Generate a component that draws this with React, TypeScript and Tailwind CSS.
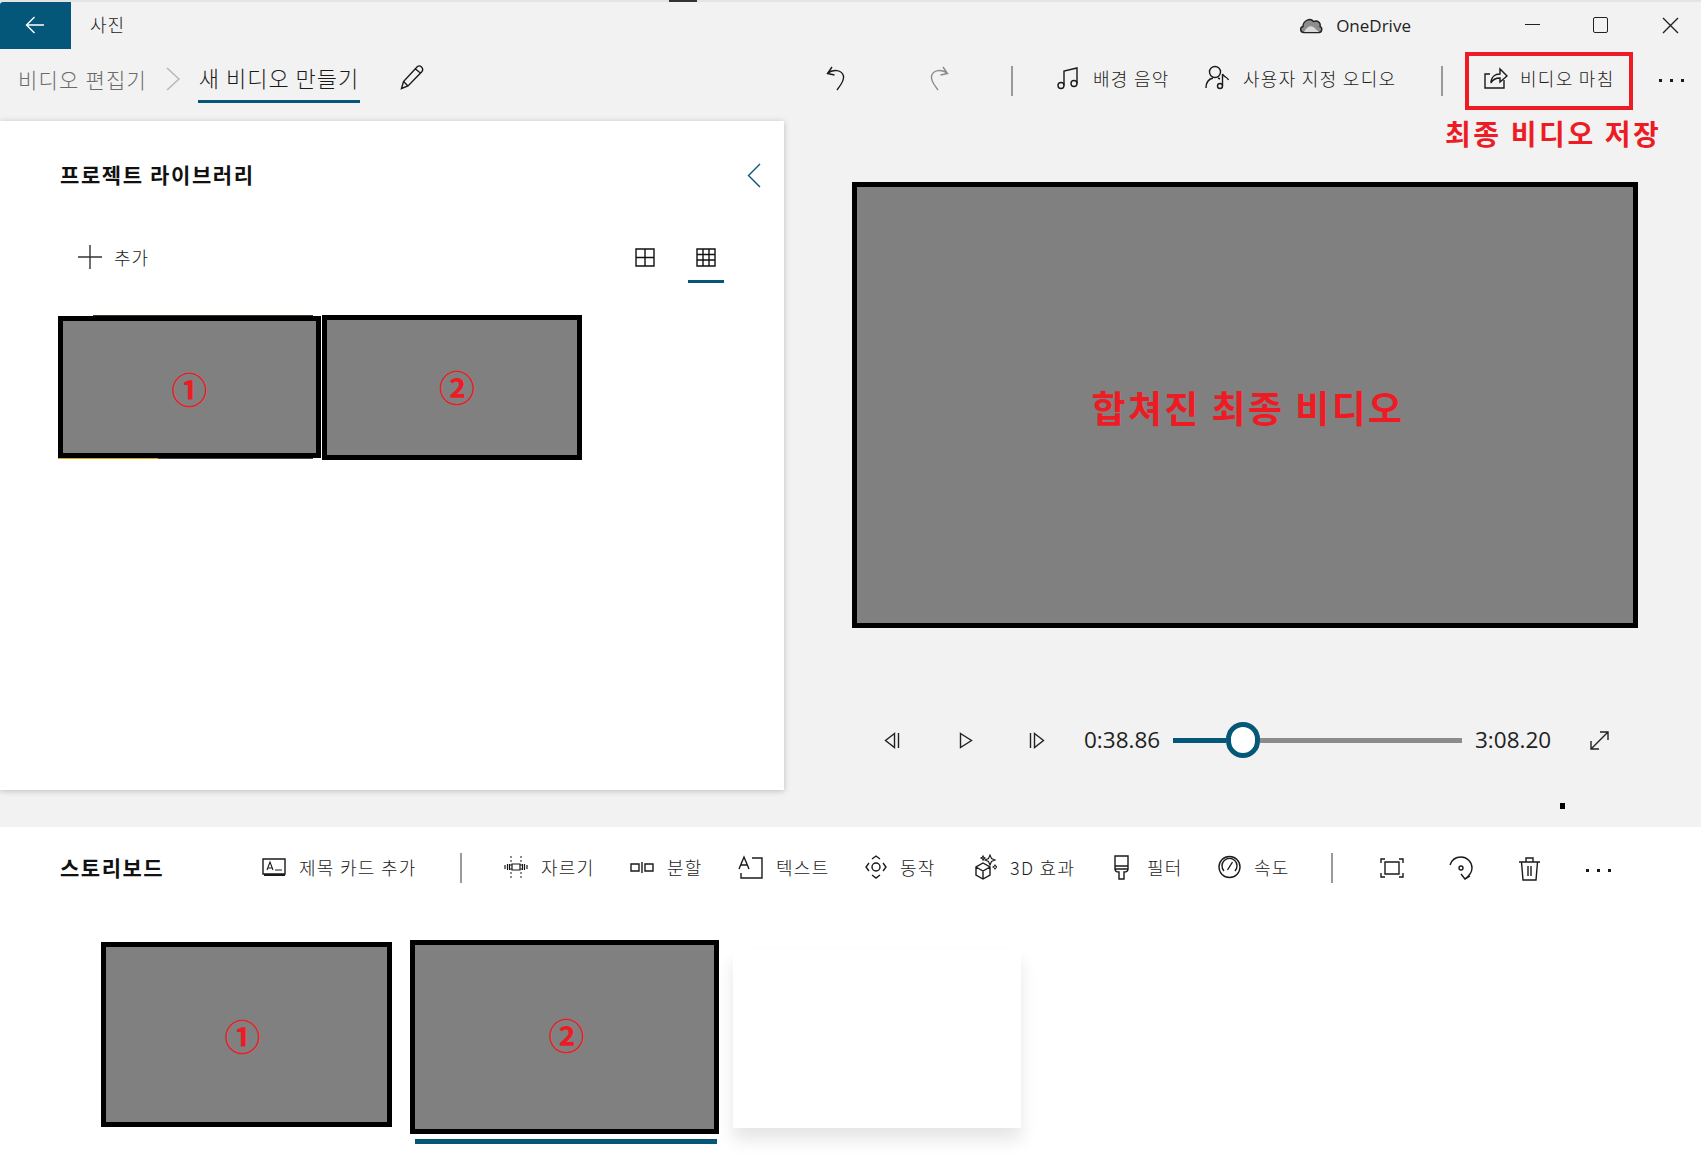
import type { ReactNode } from "react";

const FONT = { fontFamily: '"Noto Sans CJK KR", "Noto Sans", sans-serif' };

function Svg({ w, h, children, className = "" }: { w: number; h: number; children: ReactNode; className?: string }) {
  return (
    <svg
      width={w}
      height={h}
      viewBox={`0 0 ${w} ${h}`}
      fill="none"
      stroke="currentColor"
      strokeWidth="1.4"
      className={`shrink-0 ${className}`}
    >
      {children}
    </svg>
  );
}

function Dots({ className = "" }: { className?: string }) {
  return (
    <div className={`flex items-center gap-[8px] ${className}`}>
      <div className="h-[3px] w-[3px] bg-[#1a1a1a]" />
      <div className="h-[3px] w-[3px] bg-[#1a1a1a]" />
      <div className="h-[3px] w-[3px] bg-[#1a1a1a]" />
    </div>
  );
}

function Sep({ className = "" }: { className?: string }) {
  return <div className={`h-[30px] w-[2px] shrink-0 bg-[#9a9a9a] ${className}`} />;
}

function Tool({ icon, label, className }: { icon: ReactNode; label: string; className: string }) {
  return (
    <div className={`flex shrink-0 items-center gap-[13px] ${className}`}>
      {icon}
      <span className="whitespace-nowrap text-[18px] font-light leading-none tracking-[1.3px] text-[#1a1a1a]">{label}</span>
    </div>
  );
}

function Thumb({ className, label, labelClass }: { className: string; label?: string; labelClass?: string }) {
  return (
    <div className={`flex shrink-0 items-center justify-center border-[5px] border-black bg-[#808080] ${className}`}>
      {label && <span className={`leading-none text-[#ed1c24] ${labelClass}`}>{label}</span>}
    </div>
  );
}

export default function App() {
  return (
    <div className="flex h-[1158px] w-[1701px] flex-col overflow-hidden bg-white" style={FONT}>
      {/* upper area */}
      <div className="h-[827px] shrink-0 bg-[#f2f2f2]">
        <div className="flex h-[2px] bg-[#e4e4e4]">
          <div className="ml-[669px] h-[2px] w-[28px] bg-[#333333]" />
        </div>

        {/* title bar */}
        <div className="flex h-[47px] items-center">
          <div className="flex h-[47px] w-[71px] items-center justify-center rounded-tl-[3px] bg-[#05577a] pb-[2px] pr-[1px] text-white">
            <Svg w={20} h={18}>
              <path d="M19 9H1.5M9.5 1L1.5 9l8 8" />
            </Svg>
          </div>
          <span className="-mt-[3px] ml-[19px] text-[18px] font-light leading-none tracking-[1px] text-[#1a1a1a]">사진</span>
          <div className="-mt-[1px] ml-[1174px] w-[23px] text-[#444]">
            <svg width="24" height="18" viewBox="0 0 24 18" className="block">
              <path d="M5 16.5C1 16.5 .5 11.5 4 10.5 4 5 11 1 14.5 5.5 19 4 22 7 21 10.5 24 11.5 23 16.5 20 16.5Z" fill="#8d8d8d" stroke="#222" strokeWidth="1.4" />
              <path d="M5 16C8 10 12 9 15 11.5L20 16Z" fill="#d9d9d9" />
            </svg>
          </div>
          <span className="-mt-[1px] ml-[14px] w-[189px] text-[17px] leading-none text-[#222]" style={{ fontFamily: '"Open Sans", sans-serif' }}>
            OneDrive
          </span>
          <div className="-mt-[2px] h-[1.5px] w-[15px] bg-[#222]" />
          <div className="-mt-[2px] ml-[53px] h-[16px] w-[15px] rounded-[2px] border-[1.5px] border-[#222]" />
          <div className="-mt-[1px] ml-[54px] text-[#222]">
            <Svg w={17} h={17}>
              <path d="M1 1l15 15M16 1L1 16" />
            </Svg>
          </div>
        </div>

        {/* command bar */}
        <div className="flex h-[63px] items-center pb-[6px] text-[#1a1a1a]">
          <span className="ml-[18px] mt-[3px] w-[148px] whitespace-nowrap text-[21px] font-light leading-none tracking-[1.2px] text-[#6b6b6b]">
            비디오 편집기
          </span>
          <div className="mt-[3px] w-[32px] text-[#b5b5b5]">
            <Svg w={14} h={24}>
              <path d="M1 1l12 11L1 23" />
            </Svg>
          </div>
          <div className="mt-[6px] flex h-[45px] w-[162px] items-center justify-center border-b-[3px] border-[#05577a] pb-[5px]">
            <span className="whitespace-nowrap text-[22px] font-light leading-none tracking-[1px]">새 비디오 만들기</span>
          </div>
          <div className="ml-[40px] w-[425px]">
            <Svg w={25} h={25}>
              <path d="M1.5 23.5l2-7L17 2c1.5-1.5 3-1.5 4.5 0s1.5 3 .5 4.5L8 21zM3.5 16.5L8 21M15.5 4l5.5 4.5" />
            </Svg>
          </div>
          <div className="w-[103px]">
            <Svg w={22} h={26}>
              <path d="M7 2L2.5 8.5 9.5 10M2.5 8.5C8 3.500 17 5 18.5 11c1 5-3 9-6.5 14" />
            </Svg>
          </div>
          <div className="w-[83px] text-[#8a8a8a]">
            <Svg w={22} h={26}>
              <path d="M15 2l4.500 6.500L12.500 10M19.500 8.500C14 3.500 5 5 3.500 11c-1 5 3 9 6.500 14" />
            </Svg>
          </div>
          <Sep className="mt-[6px]" />
          <Tool
            className="ml-[43px] w-[149px]"
            label="배경 음악"
            icon={
              <Svg w={24} h={24}>
                <circle cx="5" cy="19.5" r="3" />
                <circle cx="18" cy="17.5" r="3" />
                <path d="M8 19.5V5l13-3v15.5" />
              </Svg>
            }
          />
          <Tool
            className="w-[236px]"
            label="사용자 지정 오디오"
            icon={
              <Svg w={25} h={26}>
                <circle cx="10" cy="7" r="5.5" />
                <path d="M1 23c0-6 3-9 7-10M13 13l2 1" />
                <circle cx="15" cy="21" r="2.5" />
                <path d="M17.5 21V9c1 3 5 3 6 6" />
              </Svg>
            }
          />
          <Sep className="mt-[6px]" />
          <div className="ml-[22px] mt-[6px] flex h-[58px] w-[168px] shrink-0 items-center gap-[12px] border-[4px] border-[#ed1c24] pb-[6px] pl-[14px]">
            <Svg w={25} h={24}>
              <path d="M21 14v8H2V8h5" />
              <path d="M8 17c0-6 4-9 9-9V3l7 7-7 6v-4c-4 0-7 1-9 5z" />
            </Svg>
            <span className="whitespace-nowrap text-[18px] font-light leading-none tracking-[1.3px]">비디오 마침</span>
          </div>
          <Dots className="ml-[26px] mt-[6px]" />
        </div>

        {/* body */}
        <div className="flex">
          <div className="mt-[9px] flex h-[669px] w-[784px] shrink-0 flex-col bg-white pl-[58px] shadow-[0_1px_6px_rgba(0,0,0,0.22)]">
            <div className="flex h-[108px] items-center">
              <span className="-mt-[2px] ml-[2px] w-[687px] whitespace-nowrap text-[21px] font-bold leading-none tracking-[1.6px] text-[#111]">
                프로젝트 라이브러리
              </span>
              <div className="text-[#05577a]">
                <Svg w={14} h={25}>
                  <path d="M13 1L1.5 12.5 13 24" />
                </Svg>
              </div>
            </div>
            <div className="mt-[2px] flex h-[52px] items-center">
              <div className="ml-[20px] text-[#333]">
                <Svg w={24} h={24}>
                  <path d="M12 0v24M0 12h24" />
                </Svg>
              </div>
              <span className="ml-[12px] w-[521px] text-[18px] font-light leading-none tracking-[1px] text-[#1a1a1a]">추가</span>
              <div className="text-[#111]">
                <Svg w={20} h={19}>
                  <path d="M1 1h18v17H1zM10 1v17M1 9.5h18" />
                </Svg>
              </div>
              <div className="ml-[33px] flex h-[52px] w-[36px] flex-col items-center justify-center border-b-[3px] border-[#05577a] pt-[3px] text-[#111]">
                <Svg w={20} h={19}>
                  <path d="M1 1h18v17H1zM7 1v17M13 1v17M1 6.5h18M1 12h18" />
                </Svg>
              </div>
            </div>
            <div className="mt-[32px] flex items-start">
              <div className="shrink-0">
                <div className="ml-[35px] h-[1px] w-[220px] bg-[#3a3a2c]" />
                <Thumb className="h-[142px] w-[263px]" label="①" labelClass="mt-[2px] text-[36px] font-bold" />
                <div className="flex h-[1px] w-[255px]">
                  <div className="h-[1px] w-[100px] bg-[#d9a514]" />
                  <div className="h-[1px] flex-1 bg-[#444]" />
                </div>
              </div>
              <Thumb className="ml-[1px] h-[145px] w-[260px]" label="②" labelClass="mb-[4px] ml-[10px] text-[36px] font-bold" />
            </div>
          </div>

          <div className="flex flex-1 flex-col pl-[68px]">
            <div className="flex h-[41px] items-center pl-[593px]">
              <span className="whitespace-nowrap text-[28px] font-bold leading-none tracking-[2.6px] text-[#ed1c24]">최종 비디오 저장</span>
            </div>
            <Thumb className="mt-[29px] h-[446px] w-[786px]" label="합쳐진 최종 비디오" labelClass="ml-[6px] mt-[4px] text-[37px] font-bold tracking-[2.4px]" />
            <div className="mt-[93px] flex h-[38px] items-center text-[#222]">
              <Svg w={16} h={17} className="ml-[32px]">
                <path d="M10.5 1.5L1.5 8.5l9 7zM14.5 1v15" />
              </Svg>
              <Svg w={14} h={17} className="ml-[59px]">
                <path d="M1.5 1.5l11 7-11 7z" />
              </Svg>
              <Svg w={16} h={17} className="ml-[56px]">
                <path d="M1.5 1v15M5.5 1.5l9 7-9 7z" />
              </Svg>
              <span className="ml-[39px] w-[89px] text-[22.5px] leading-none" style={{ fontFamily: '"Open Sans", sans-serif' }}>
                0:38.86
              </span>
              <div className="flex w-[289px] items-center">
                <div className="h-[5px] w-[53px] bg-[#05577a]" />
                <div className="h-[36px] w-[34px] shrink-0 rounded-full border-[5px] border-[#05577a] bg-white" />
                <div className="h-[5px] flex-1 bg-[#8c8c8c]" />
              </div>
              <span className="ml-[13px] w-[114px] text-[22.5px] leading-none" style={{ fontFamily: '"Open Sans", sans-serif' }}>
                3:08.20
              </span>
              <Svg w={21} h={21}>
                <path d="M2 19L19 2M11 2h8v8M2 11v8h8" />
              </Svg>
            </div>
            <div className="ml-[708px] mt-[44px] h-[6px] w-[5px] bg-black" />
          </div>
        </div>
      </div>

      {/* storyboard */}
      <div className="flex h-[80px] shrink-0 items-center pl-[60px] text-[#1a1a1a]">
        <span className="w-[202px] whitespace-nowrap text-[21px] font-bold leading-none tracking-[1.5px] text-[#111]">스토리보드</span>
        <Tool
          className="w-[198px]"
          label="제목 카드 추가"
          icon={
            <Svg w={24} h={18}>
              <path d="M1 1h22v15H1zM2 17.5h21" />
              <path d="M5 12l3-8 3 8M6 10h4M13 12h7" strokeWidth="1.1" />
            </Svg>
          }
        />
        <Sep className="mt-[1px] h-[24px]" />
        <Tool
          className="ml-[42px] w-[126px]"
          label="자르기"
          icon={
            <Svg w={24} h={22}>
              <path d="M8 8h8v6H8zM1 9v4M3.5 8v6M5.5 8v6M18.5 8v6M20.5 8v6M23 9v4" strokeWidth="1.2" />
              <path d="M7 0v22M17 0v22" strokeDasharray="2 2" strokeWidth="1" />
            </Svg>
          }
        />
        <Tool
          className="w-[108px]"
          label="분할"
          icon={
            <Svg w={24} h={14}>
              <path d="M1 4h8v7H1zM15 4h8v7h-8zM12 2v11" />
            </Svg>
          }
        />
        <Tool
          className="w-[127px]"
          label="텍스트"
          icon={
            <Svg w={25} h={24}>
              <path d="M1 14L6 2l5 12M3 10h6M14 3h10v20H3v-5" />
            </Svg>
          }
        />
        <Tool
          className="w-[109px]"
          label="동작"
          icon={
            <Svg w={22} h={24}>
              <circle cx="11" cy="12" r="4" />
              <path d="M7 4l4-3 4 3M7 20l4 3 4-3M4 8l-3 4 3 4M18 8l3 4-3 4" />
            </Svg>
          }
        />
        <Tool
          className="w-[139px]"
          label="3D 효과"
          icon={
            <Svg w={23} h={26}>
              <path d="M9 9l7 4v8l-7 4-7-4v-8zM2 13l7 4 7-4M9 17v8" />
              <path d="M16 1l1.5 3.5L21 6l-3.5 1.5L16 11l-1.5-3.5L11 6l3.5-1.5zM21 11l.8 1.2L23 13l-1.2.8L21 15l-.8-1.2L19 13l1.2-.8zM9 2l.7 1.3L11 4l-1.3.7L9 6l-.7-1.3L7 4l1.3-.7z" strokeWidth="1.1" />
            </Svg>
          }
        />
        <Tool
          className="w-[105px] !gap-[17px]"
          label="필터"
          icon={
            <Svg w={17} h={25}>
              <path d="M2 1h13v13H2zM2 11h13M2 14c0 2 1 3 4 3v7h5v-7c3 0 4-1 4-3" />
            </Svg>
          }
        />
        <Tool
          className="w-[113px]"
          label="속도"
          icon={
            <Svg w={23} h={24}>
              <circle cx="11.5" cy="12" r="10.5" />
              <path d="M6 16a7.5 7.5 0 1 1 11 0" />
              <path d="M9.5 15l5-8" />
            </Svg>
          }
        />
        <Sep className="mt-[1px] h-[24px]" />
        <div className="ml-[47px] mt-[2px] w-[69px] shrink-0">
          <Svg w={24} h={20}>
            <path d="M5 4h14v12H5zM1 5V1h4M19 1h4v4M1 15v4h4M23 15v4h-4" />
          </Svg>
        </div>
        <div className="mt-[2px] w-[69px] shrink-0">
          <Svg w={25} h={25}>
            <path d="M1 9C3 3 8 1 12 1c6 0 11 5 11 11 0 5-3 8-7 11" />
            <path d="M12 18l4 5 5-3" />
            <circle cx="12" cy="12" r="2" />
          </Svg>
        </div>
        <div className="mt-[2px] w-[68px] shrink-0">
          <Svg w={23} h={25}>
            <path d="M1 6h21M8 6V2h7v4M3.5 6l1.5 18h13l1.5-18M10 10v10M13 10v10" />
          </Svg>
        </div>
        <Dots className="mt-[6px]" />
      </div>

      <div className="flex items-start pl-[101px]">
        <Thumb className="mt-[35px] h-[185px] w-[291px]" label="①" labelClass="mr-[8px] text-[36px] font-bold" />
        <div className="ml-[18px] mt-[33px] shrink-0">
          <Thumb className="h-[194px] w-[309px]" label="②" labelClass="mb-[6px] ml-[4px] text-[36px] font-bold" />
          <div className="ml-[5px] mt-[5px] h-[5px] w-[302px] bg-[#05577a]" />
        </div>
        <div className="ml-[14px] mt-[43px] h-[178px] w-[288px] shrink-0 bg-white shadow-[0_12px_16px_rgba(0,0,0,0.1)]" />
      </div>
    </div>
  );
}
